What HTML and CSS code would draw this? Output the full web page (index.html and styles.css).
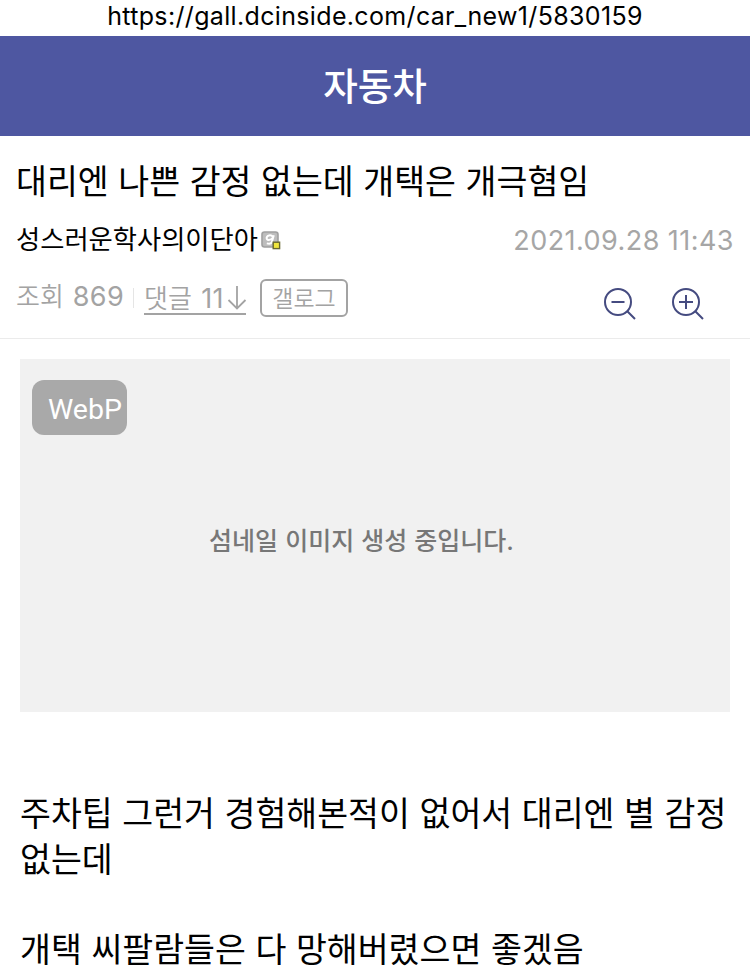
FILE: index.html
```html
<!DOCTYPE html>
<html lang="ko">
<head>
    <meta charset="UTF-8">
    <meta name="viewport" content="width=device-width, initial-scale=1.0">
    <title>자동차 갤러리</title>
    <link rel="stylesheet" href="styles.css">
</head>
<body>
    <div class="page-url">https://gall.dcinside.com/car_new1/5830159</div>

    <header class="gallery-header">
        <h1>자동차</h1>
    </header>

    <section class="post-head">
        <h2 class="post-title">대리엔 나쁜 감정 없는데 개택은 개극혐임</h2>
        <div class="post-author">
            <span class="nickname">성스러운학사의이단아</span>
            <svg class="nick-icon" width="20" height="19" viewBox="0 0 20 19">
                <rect x="1" y="1" width="16" height="15" rx="2.5" fill="#bdbdbd" stroke="#a0a0a0" stroke-width="1.6"/>
                <path d="M12.8 4.2 10.8 11.2Q10 13.4 5.8 12.4M12 6Q10 3.3 7 4.8Q4.500 7 6.500 8.800Q9.500 9.500 11.500 7" fill="none" stroke="#fff" stroke-width="2"/>
                <rect x="12.200" y="11.200" width="6.400" height="6.400" fill="#f0e63c" stroke="#67672e" stroke-width="1.400"/>
            </svg>
            <span class="date">2021.09.28 11:43</span>
        </div>
        <div class="post-info">
            <span class="views">조회 <span class="num">869</span></span>
            <a class="comments" href="#"><span>댓글 <span class="num">11</span></span><svg width="20" height="24" viewBox="0 0 20 24">
                <path d="M10 0V22M1.500 14 10 22.500 18.500 14" fill="none" stroke="#a3a3a3" stroke-width="1.800"/>
            </svg></a>
            <a class="btn-gallog" href="#">갤로그</a>
            <div class="zoom-buttons">
                <svg width="34" height="34" viewBox="0 0 34 34">
                    <circle cx="15" cy="15" r="13" />
                    <path d="M8.500 15H21.500M24.300 24.300 32 32" />
                </svg>
                <svg width="34" height="34" viewBox="0 0 34 34">
                    <circle cx="15" cy="15" r="13" />
                    <path d="M8 15H22M15 8V22M24.300 24.300 32 32" />
                </svg>
            </div>
        </div>
    </section>

    <main class="post-body">
        <div class="thumbnail">
            <span class="badge">WebP</span>
            <p>섬네일 이미지 생성 중입니다.</p>
        </div>
        <p class="text">주차팁 그런거 경험해본적이 없어서 대리엔 별 감정 없는데</p>
        <p class="text">개택 씨팔람들은 다 망해버렸으면 좋겠음</p>
    </main>
</body>
</html>
```
FILE: styles.css
```css
* {
    box-sizing: border-box;
}
body {
    margin: 0;
    height: 974px;
    overflow: hidden;
    background-color: #fff;
    color: #000;
    font-family: Inter, "Noto Sans CJK KR", sans-serif;
}
h1, h2, p {
    margin: 0;
}
.page-url {
    height: 36px;
    line-height: 33px;
    text-align: center;
    font-size: 25px;
    letter-spacing: 0.34px;
}
.gallery-header {
    height: 100px;
    background-color: #4e57a1;
    color: #fff;
    text-align: center;
}
.gallery-header h1 {
    font-size: 37.6px;
    font-weight: 500;
    line-height: 101px;
}
.post-head {
    height: 203px;
    padding: 21px 16px 0;
    border-bottom: 1px solid #ebebeb;
}
.post-title {
    font-family: "Noto Sans CJK KR", sans-serif;
    font-size: 33.6px;
    font-weight: 400;
    line-height: 46px;
    word-spacing: 0.2px;
    white-space: nowrap;
}
.post-author {
    display: flex;
    align-items: center;
    height: 36px;
    margin-top: 19px;
    white-space: nowrap;
}
.nickname {
    font-size: 26.3px;
    line-height: 36px;
}
.nick-icon {
    margin-left: 3px;
}
.date {
    margin-left: auto;
    color: #a6a6a6;
    font-size: 27px;
    letter-spacing: 0.45px;
}
.post-info {
    display: flex;
    align-items: flex-start;
    margin-top: 21px;
    color: #a3a3a3;
    font-size: 26px;
    font-weight: 350;
    white-space: nowrap;
}
.post-info a {
    color: #a3a3a3;
    text-decoration: none;
}
.num {
    font-size: 27px;
    font-weight: 400;
    letter-spacing: 0.4px;
}
.views {
    padding-top: 1px;
    line-height: 34px;
    word-spacing: 1.5px;
}
.views::after {
    content: "";
    display: inline-block;
    width: 1px;
    height: 20px;
    margin: 0 10px 0 9px;
    background-color: #e5e5e5;
    vertical-align: -2px;
}
.comments {
    display: flex;
    align-items: center;
    width: 102px;
    height: 36px;
    padding-top: 5px;
    border-bottom: 2px solid #a3a3a3;
    line-height: 34px;
    word-spacing: 2px;
}
.comments svg {
    margin: 0 -1px 2px auto;
}
.btn-gallog {
    width: 88px;
    height: 38px;
    margin-left: 14px;
    border: 2px solid #a3a3a3;
    border-radius: 6px;
    font-size: 23px;
    line-height: 36px;
    text-align: center;
}
.zoom-buttons {
    display: flex;
    gap: 34px;
    margin: 8px 29px 0 auto;
}
.zoom-buttons svg {
    fill: none;
    stroke: #454b80;
    stroke-width: 2;
}
.post-body {
    padding: 20px 20px 0;
}
.thumbnail {
    position: relative;
    height: 353px;
    margin-bottom: 77px;
    background-color: #f1f1f1;
    color: #777;
    font-size: 25px;
    font-weight: 500;
    line-height: 364px;
    text-align: center;
}
.thumbnail p {
    padding-right: 27px;
    word-spacing: 0.4px;
}
.badge {
    position: absolute;
    top: 21px;
    left: 12px;
    width: 95px;
    height: 55px;
    padding-left: 11px;
    border-radius: 12px;
    background-color: #a9a9a9;
    color: #fff;
    font-family: Roboto, sans-serif;
    font-size: 28.5px;
    font-weight: 400;
    line-height: 59px;
}
.text {
    margin-bottom: 45px;
    font-family: "Noto Sans CJK KR", sans-serif;
    font-size: 33.6px;
    line-height: 45.5px;
    word-spacing: 0.2px;
}
```
